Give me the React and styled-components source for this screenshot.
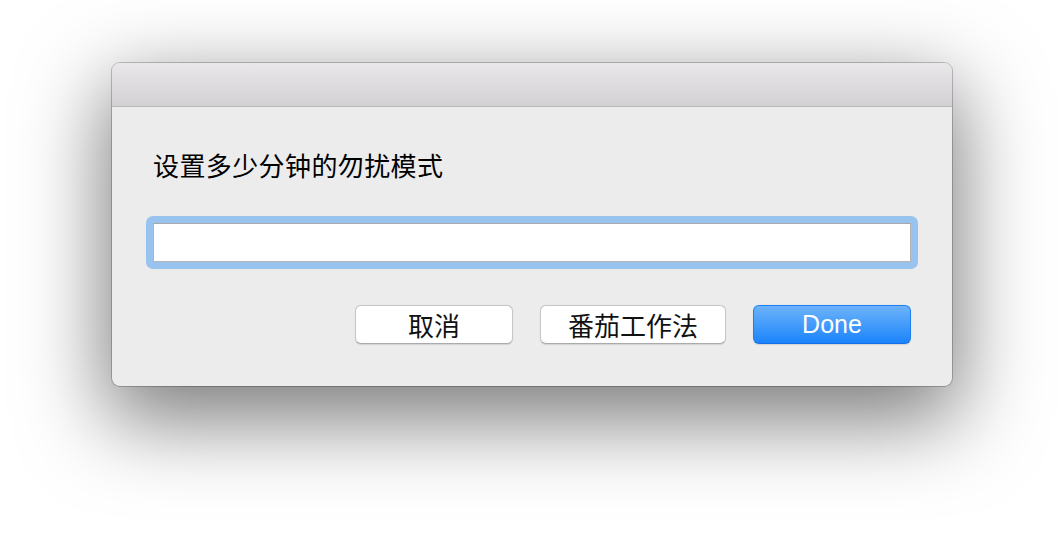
import React from "react";
import styled, { createGlobalStyle } from "styled-components";

const GlobalStyle = createGlobalStyle`
  html, body {
    margin: 0;
    padding: 0;
    background: #fff;
    overflow: hidden;
  }
  body {
    font-family: "Noto Sans CJK SC", "Liberation Sans", sans-serif;
  }
`;

const Page = styled.div`
  width: 1064px;
  height: 546px;
  display: flex;
  justify-content: center;
  align-items: flex-start;
  padding-top: 63px;
  box-sizing: border-box;
`;

const Sheet = styled.div`
  width: 840px;
  height: 323px;
  display: flex;
  flex-direction: column;
  background: #ececec;
  border-radius: 8px;
  overflow: hidden;
  box-shadow: 0 0 0 1px rgba(0, 0, 0, 0.22), 0 28px 84px 6px rgba(0, 0, 0, 0.52);
`;

const TitleBar = styled.div`
  height: 43px;
  flex-shrink: 0;
  background: linear-gradient(180deg, #e9e7e9 0%, #d3d1d3 100%);
  border-bottom: 1px solid #b9b7b9;
`;

const Body = styled.div`
  flex: 1;
  display: flex;
  flex-direction: column;
  padding: 40px 34px 0;
`;

const Label = styled.div`
  margin-left: 7px;
  font-size: 26px;
  letter-spacing: 0.4px;
  line-height: 36px;
  color: #000;
`;

const FocusRing = styled.div`
  margin-top: 33px;
  padding: 7px;
  border-radius: 7px;
  background: #99c3ef;
`;

const Field = styled.input`
  display: block;
  width: 100%;
  height: 39px;
  box-sizing: border-box;
  margin: 0;
  border: 1px solid #b5b5b5;
  border-top-color: #a9a9a9;
  background: #fff;
  outline: none;
  font-size: 24px;
  font-family: inherit;
  padding: 0 6px;
`;

const ButtonRow = styled.div`
  display: flex;
  justify-content: flex-end;
  gap: 27px;
  margin-top: 36px;
  padding-right: 7px;
`;

const Button = styled.button`
  min-width: 158px;
  height: 39px;
  box-sizing: border-box;
  padding: 0 27px;
  border-radius: 6px;
  font-family: ${(p) =>
    p.$primary
      ? `"Liberation Sans", "Noto Sans CJK SC", sans-serif`
      : `"Noto Sans CJK SC", "Liberation Sans", sans-serif`};
  font-size: ${(p) => (p.$primary ? "25px" : "26px")};
  line-height: 1;
  cursor: default;
  color: ${(p) => (p.$primary ? "#fff" : "#111")};
  background: ${(p) =>
    p.$primary ? "linear-gradient(180deg, #6db3fa 0%, #1b84fb 100%)" : "#fff"};
  border: 1px solid ${(p) => (p.$primary ? "#1d7ff0" : "#c6c6c6")};
  border-bottom-color: ${(p) => (p.$primary ? "#1470e8" : "#ababab")};
  box-shadow: 0 0.5px 1px rgba(0, 0, 0, 0.12);
`;

export default function App() {
  return (
    <>
      <GlobalStyle />
      <Page>
        <Sheet>
          <TitleBar />
          <Body>
            <Label>设置多少分钟的勿扰模式</Label>
            <FocusRing>
              <Field type="text" />
            </FocusRing>
            <ButtonRow>
              <Button>取消</Button>
              <Button>番茄工作法</Button>
              <Button $primary>Done</Button>
            </ButtonRow>
          </Body>
        </Sheet>
      </Page>
    </>
  );
}
